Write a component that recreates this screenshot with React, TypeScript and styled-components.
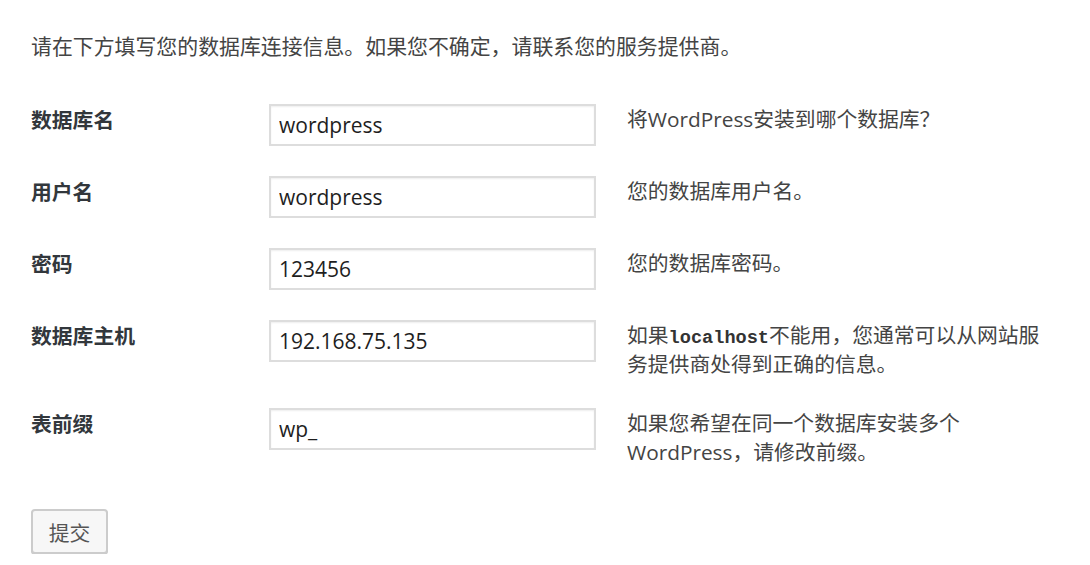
import React from "react";
import styled, { createGlobalStyle } from "styled-components";

const GlobalStyle = createGlobalStyle`
  html, body {
    margin: 0;
    padding: 0;
    background: #ffffff;
  }
  body {
    font-family: "Noto Sans CJK SC", "Noto Sans", sans-serif;
    color: #444444;
  }
`;

const Page = styled.div`
  padding: 31px 33px 0 31px;
  width: 1090px;
  box-sizing: border-box;
`;

const Intro = styled.p`
  margin: 0;
  font-size: 20.9px;
  line-height: 29px;
  color: #444444;
`;

const Form = styled.form`
  margin: 44px 0 0 0;
  display: flex;
  flex-direction: column;
  align-items: flex-start;
`;

const Fields = styled.div`
  display: flex;
  flex-direction: column;
  gap: 30px;
`;

const FieldRow = styled.div`
  display: grid;
  grid-template-columns: 207px 327px 430px;
  column-gap: 31px;
  align-items: start;
`;

const Label = styled.label`
  padding-top: 1px;
  font-size: 20.8px;
  line-height: 29px;
  font-weight: 700;
  color: #32373c;
`;

const TextInput = styled.input`
  box-sizing: border-box;
  width: 327px;
  height: 42px;
  margin: 0;
  padding: 0 8px;
  border: 2px solid #dddddd;
  border-radius: 0;
  box-shadow: inset 0 1px 2px rgba(0, 0, 0, 0.07);
  background: #ffffff;
  font-family: "Open Sans", "Noto Sans", sans-serif;
  font-size: 21px;
  color: #1e1e1e;
  outline: none;
`;

const Desc = styled.p`
  margin: 0;
  font-size: 20.8px;
  line-height: 29px;
  color: #444444;
`;

const Latin = styled.span`
  font-family: "Open Sans", "Noto Sans", sans-serif;
`;

const Code = styled.code`
  font-family: "Liberation Mono", "DejaVu Sans Mono", monospace;
  font-size: 18.6px;
  line-height: 1;
  font-weight: 700;
  color: #333333;
`;

const SubmitButton = styled.button`
  display: block;
  margin-top: 42px;
  width: 77px;
  height: 45px;
  box-sizing: border-box;
  padding: 0;
  border: 2px solid #cccccc;
  border-radius: 4px;
  background: #f7f7f7;
  box-shadow: 0 1px 0 #cccccc;
  font-family: "Noto Sans CJK SC", sans-serif;
  font-size: 20.8px;
  color: #555555;
  cursor: pointer;
`;

type Field = {
  id: string;
  label: string;
  value: string;
  desc: React.ReactNode;
};

const fields: Field[] = [
  {
    id: "dbname",
    label: "数据库名",
    value: "wordpress",
    desc: (
      <>
        将<Latin>WordPress</Latin>安装到哪个数据库？
      </>
    ),
  },
  {
    id: "uname",
    label: "用户名",
    value: "wordpress",
    desc: "您的数据库用户名。",
  },
  {
    id: "pwd",
    label: "密码",
    value: "123456",
    desc: "您的数据库密码。",
  },
  {
    id: "dbhost",
    label: "数据库主机",
    value: "192.168.75.135",
    desc: (
      <>
        如果<Code>localhost</Code>不能用，您通常可以从网站服务提供商处得到正确的信息。
      </>
    ),
  },
  {
    id: "prefix",
    label: "表前缀",
    value: "wp_",
    desc: (
      <>
        如果您希望在同一个数据库安装多个<Latin>WordPress</Latin>，请修改前缀。
      </>
    ),
  },
];

export default function App() {
  return (
    <>
      <GlobalStyle />
      <Page>
        <Intro>请在下方填写您的数据库连接信息。如果您不确定，请联系您的服务提供商。</Intro>
        <Form onSubmit={(e) => e.preventDefault()}>
          <Fields>
            {fields.map((f) => (
              <FieldRow key={f.id}>
                <Label htmlFor={f.id}>{f.label}</Label>
                <TextInput id={f.id} type="text" defaultValue={f.value} />
                <Desc>{f.desc}</Desc>
              </FieldRow>
            ))}
          </Fields>
          <SubmitButton type="submit">提交</SubmitButton>
        </Form>
      </Page>
    </>
  );
}
